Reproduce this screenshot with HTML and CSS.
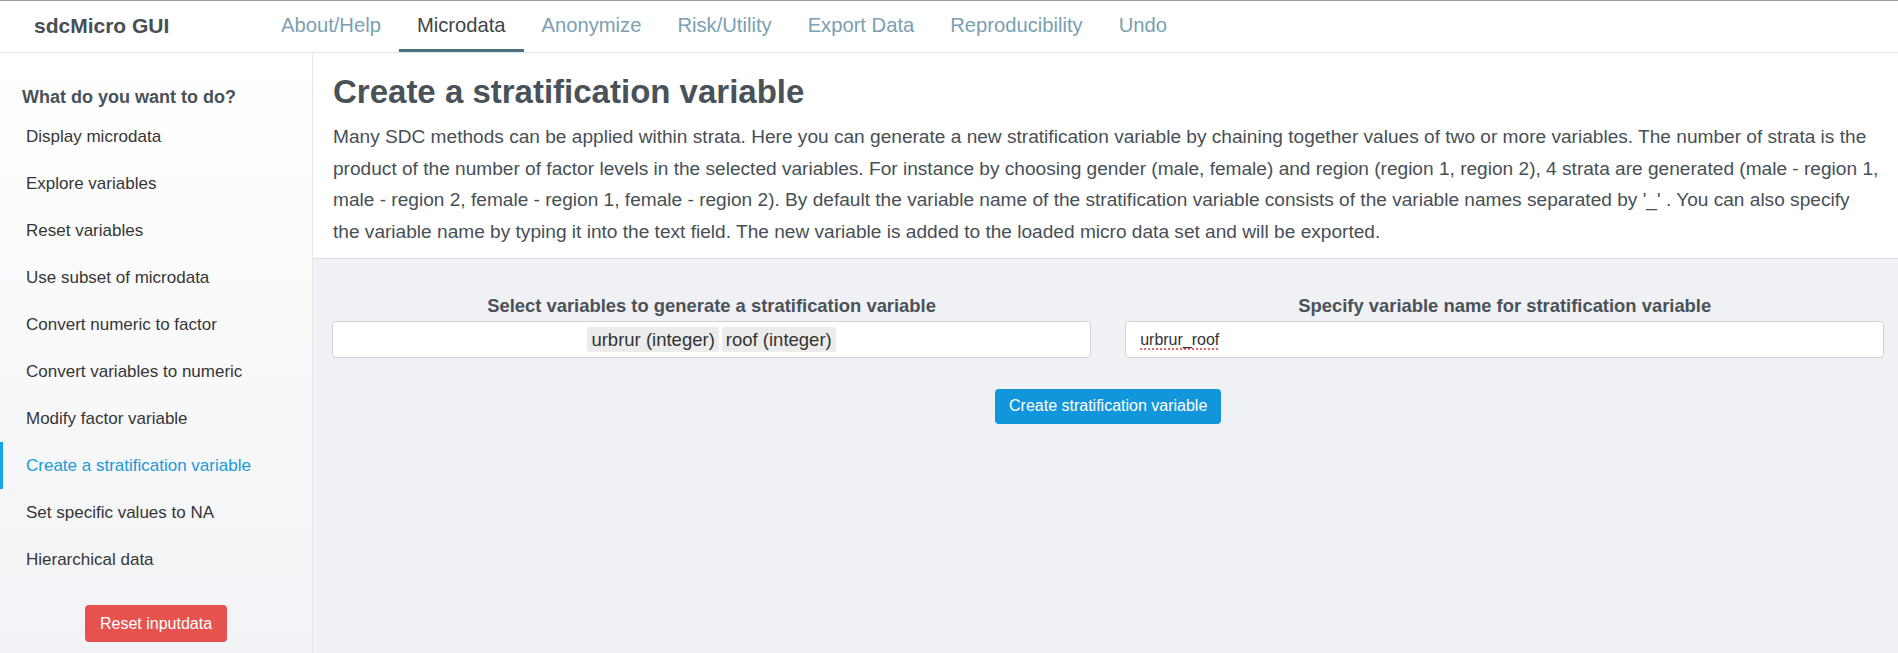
FILE: index.html
```html
<!DOCTYPE html>
<html lang="en">
<head>
<meta charset="utf-8">
<title>sdcMicro GUI</title>
<link rel="stylesheet" href="styles.css">
</head>
<body>
<header class="navbar">
  <div class="brand">sdcMicro GUI</div>
  <nav class="tabs">
    <a class="tab">About/Help</a>
    <a class="tab active">Microdata</a>
    <a class="tab">Anonymize</a>
    <a class="tab">Risk/Utility</a>
    <a class="tab">Export Data</a>
    <a class="tab">Reproducibility</a>
    <a class="tab">Undo</a>
  </nav>
</header>
<div class="page">
  <aside class="sidebar">
    <h4 class="side-title">What do you want to do?</h4>
    <ul class="menu">
      <li class="menu-item">Display microdata</li>
      <li class="menu-item">Explore variables</li>
      <li class="menu-item">Reset variables</li>
      <li class="menu-item">Use subset of microdata</li>
      <li class="menu-item">Convert numeric to factor</li>
      <li class="menu-item">Convert variables to numeric</li>
      <li class="menu-item">Modify factor variable</li>
      <li class="menu-item active">Create a stratification variable</li>
      <li class="menu-item">Set specific values to NA</li>
      <li class="menu-item">Hierarchical data</li>
    </ul>
    <div class="reset-wrap"><button class="btn btn-danger">Reset inputdata</button></div>
  </aside>
  <main class="main">
    <section class="intro">
      <h2 class="title">Create a stratification variable</h2>
      <p class="lead">Many SDC methods can be applied within strata. Here you can generate a new stratification variable by chaining together values of two or more variables. The number of strata is the<br>product of the number of factor levels in the selected variables. For instance by choosing gender (male, female) and region (region 1, region 2), 4 strata are generated (male - region 1,<br>male - region 2, female - region 1, female - region 2). By default the variable name of the stratification variable consists of the variable names separated by '_' . You can also specify<br>the variable name by typing it into the text field. The new variable is added to the loaded micro data set and will be exported.</p>
    </section>
    <section class="form">
      <div class="field">
        <label class="field-label">Select variables to generate a stratification variable</label>
        <div class="box select">
          <span class="tag">urbrur (integer)</span>
          <span class="tag">roof (integer)</span>
        </div>
      </div>
      <div class="field">
        <label class="field-label">Specify variable name for stratification variable</label>
        <div class="box text-input"><span class="misspelled">urbrur_roof</span></div>
      </div>
    </section>
    <div class="actions"><button class="btn btn-primary">Create stratification variable</button></div>
  </main>
</div>
</body>
</html>
```
FILE: styles.css
```css
* { box-sizing: border-box; }
html, body { margin: 0; padding: 0; }
body {
  font-family: "Liberation Sans", Arial, sans-serif;
  color: #333;
  background: #fff;
  height: 653px;
  overflow: hidden;
}

.navbar {
  display: flex;
  height: 53px;
  border-top: 1px solid #9a9a9a;
  border-bottom: 1px solid #e3e8ec;
  background: #fff;
}
.brand {
  width: 263px;
  padding-left: 34px;
  font-size: 21px;
  font-weight: bold;
  line-height: 50px;
  color: #474e54;
}
.tabs { display: flex; }
.tab {
  display: block;
  height: 51px;
  padding: 0 18px;
  font-size: 20.2px;
  line-height: 48px;
  color: #7aa0b1;
  border-bottom: 3px solid transparent;
}
.tab.active {
  color: #3e4449;
  border-bottom-color: #4b6f81;
}

.page {
  display: flex;
  height: 600px;
}

.sidebar {
  width: 313px;
  flex: none;
  border-right: 1px solid #e4e6ea;
  background: linear-gradient(to bottom, #ffffff 0%, #f2f3f6 100%);
}
.side-title {
  margin: 0 0 5px;
  padding: 33px 0 0 22px;
  font-size: 18px;
  line-height: 22px;
  font-weight: bold;
  color: #48525a;
}
.menu { list-style: none; margin: 0; padding: 0; }
.menu-item {
  height: 47px;
  line-height: 47px;
  padding-left: 26px;
  font-size: 17px;
  color: #363636;
}
.menu-item.active {
  color: #1b9ad8;
  box-shadow: inset 3px 0 0 #14a6e8;
}
.reset-wrap {
  margin-top: 22px;
  text-align: center;
}

.btn {
  border: none;
  border-radius: 4px;
  color: #fff;
  font-family: "Liberation Sans", Arial, sans-serif;
  font-size: 16px;
  cursor: pointer;
}
.btn-danger {
  width: 142px;
  height: 37px;
  background: #e6534f;
}
.btn-primary {
  height: 35px;
  padding: 0 14px;
  background: #1296db;
}

.main {
  flex: 1;
  background: #f0f1f4;
}
.intro {
  background: #fff;
  padding: 20px 20px 10px 20px;
  border-bottom: 1px solid #d8dbdf;
}
.title {
  margin: 0;
  font-size: 33px;
  line-height: 38px;
  font-weight: bold;
  color: #495258;
}
.lead {
  margin: 10px 0 0;
  font-size: 19.1px;
  line-height: 31.7px;
  color: #474f55;
  white-space: nowrap;
}

.form {
  display: grid;
  grid-template-columns: 1fr 1fr;
  column-gap: 34px;
  padding: 36px 14px 0 19px;
}
.field-label {
  display: block;
  margin-bottom: 4px;
  text-align: center;
  font-size: 18.4px;
  line-height: 22px;
  font-weight: bold;
  color: #4a5258;
}
.box {
  height: 37px;
  border: 1px solid #cfd2d6;
  border-radius: 4px;
  background: #fff;
}
.select {
  display: flex;
  justify-content: center;
  align-items: center;
  gap: 3px;
}
.tag {
  background: #ececec;
  border-radius: 3px;
  padding: 0 4px;
  font-size: 18.5px;
  line-height: 25px;
  color: #333;
}
.text-input {
  padding-left: 14px;
  font-size: 16px;
  line-height: 35px;
  color: #333;
}
.misspelled {
  text-decoration: underline dotted #e0443c;
  text-underline-offset: 4px;
}

.actions {
  padding: 31px 14px 0 19px;
  text-align: center;
}
```
